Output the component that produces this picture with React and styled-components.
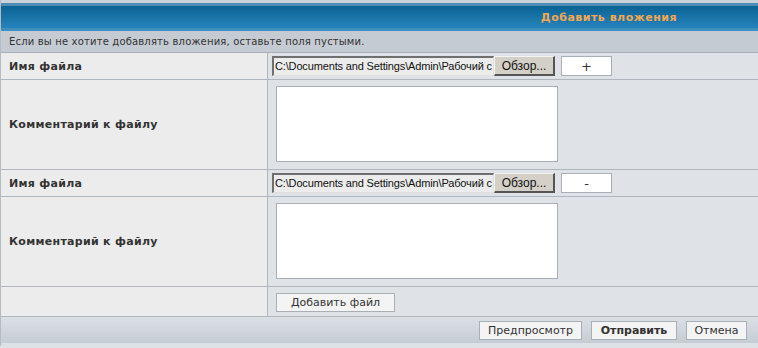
import React from 'react';
import styled, { createGlobalStyle } from 'styled-components';

const Global = createGlobalStyle`
  html, body { margin: 0; padding: 0; background: #dfe3e7; }
  body { font-family: "DejaVu Sans", Verdana, sans-serif; }
`;

const Panel = styled.div`
  width: 758px;
  border-left: 1px solid #b4bbc3;
  box-sizing: border-box;
  background: #dfe3e7;
`;

const TopStrip = styled.div`
  height: 3px;
  background: #ccd4db;
`;

const Header = styled.div`
  height: 28px;
  box-sizing: border-box;
  border-top: 3px solid #4d8cb5;
  border-bottom: 3px solid #3f8fc0;
  background: linear-gradient(to bottom, #0c6394, #2683bb);
  display: flex;
  align-items: center;
  justify-content: flex-end;
  padding-right: 81px;
  color: #f3a751;
  font-size: 11px;
  letter-spacing: 0.5px;
  font-weight: bold;
`;

const Info = styled.div`
  height: 21px;
  background: #c5cbd2;
  border-bottom: 1px solid #a9b0b8;
  display: flex;
  align-items: center;
  padding-left: 8px;
  font-size: 10px;
  letter-spacing: 0.17px;
  color: #333;
`;

const Row = styled.div`
  display: grid;
  grid-template-columns: 267px 1fr;
  height: ${p => p.h}px;
  border-bottom: 1px solid #b0b6bd;
`;

const Label = styled.div`
  background: #ececec;
  border-right: 1px solid #b0b6bd;
  display: flex;
  align-items: center;
  padding-left: 8px;
  font-size: 11px;
  letter-spacing: 0.3px;
  font-weight: bold;
  color: #333;
`;

const Field = styled.div`
  background: #dfe3e7;
  display: flex;
  align-items: ${p => p.top ? 'flex-start' : 'center'};
  padding: ${p => p.top ? '6px 0 0 8px' : '0 0 0 4px'};
  gap: 6px;
`;

const FileBox = styled.div`
  display: flex;
  height: 20px;
`;

const FilePath = styled.div`
  width: 222px;
  height: 20px;
  box-sizing: border-box;
  background: #ececec;
  border-top: 2px solid #6f6f6f;
  border-left: 2px solid #6f6f6f;
  border-right: 1px solid #e0e0e0;
  border-bottom: 1px solid #e0e0e0;
  padding-left: 1px;
  font-family: "Liberation Sans", Arial, sans-serif;
  font-size: 11px;
  letter-spacing: -0.15px;
  color: #111;
  line-height: 17px;
  white-space: nowrap;
  overflow: hidden;
`;

const Browse = styled.div`
  width: 61px;
  height: 20px;
  box-sizing: border-box;
  background: #d4d0c8;
  border-top: 1px solid #f4f4f4;
  border-left: 1px solid #f4f4f4;
  border-right: 2px solid #555;
  border-bottom: 2px solid #555;
  font-family: "Liberation Sans", Arial, sans-serif;
  font-size: 12px;
  color: #111;
  display: flex;
  align-items: center;
  justify-content: center;
`;

const Button = styled.button`
  height: ${p => p.h || 20}px;
  width: ${p => p.w}px;
  padding: 0;
  background: ${p => p.bg || '#f4f4f4'};
  border: 1px solid #a9afb6;
  font-family: "DejaVu Sans", Verdana, sans-serif;
  font-size: ${p => p.fs || 11}px;
  font-weight: ${p => p.bold ? 'bold' : 'normal'};
  color: #333;
`;

const Comment = styled.div`
  width: 280px;
  height: 74px;
  background: #fff;
  border: 1px solid #a9afb6;
`;

const Footer = styled.div`
  height: 26px;
  background: linear-gradient(to bottom, #dbe0e5, #c5ccd3);
  display: flex;
  align-items: center;
  justify-content: flex-end;
  gap: 9px;
  padding-right: 11px;
`;

const Bottom = styled.div`
  height: 3px;
  background: #dde2e6;
`;

function FileRow({ sign }) {
  return (
    <Row h={26}>
      <Label>Имя файла</Label>
      <Field>
        <FileBox>
          <FilePath>C:\Documents and Settings\Admin\Рабочий с</FilePath>
          <Browse>Обзор...</Browse>
        </FileBox>
        <Button w={51} bg="#fff" fs={13}>{sign}</Button>
      </Field>
    </Row>
  );
}

function CommentRow() {
  return (
    <Row h={89}>
      <Label>Комментарий к файлу</Label>
      <Field top>
        <Comment />
      </Field>
    </Row>
  );
}

export default function App() {
  return (
    <>
      <Global />
      <Panel>
        <TopStrip />
        <Header>Добавить вложения</Header>
        <Info>Если вы не хотите добавлять вложения, оставьте поля пустыми.</Info>
        <FileRow sign="+" />
        <CommentRow />
        <FileRow sign="-" />
        <CommentRow />
        <Row h={29}>
          <Label />
          <Field top>
            <Button w={119} h={19}>Добавить файл</Button>
          </Field>
        </Row>
        <Footer>
          <Button w={103} h={19}>Предпросмотр</Button>
          <Button w={86} h={19} bold>Отправить</Button>
          <Button w={61} h={19}>Отмена</Button>
        </Footer>
        <Bottom />
      </Panel>
    </>
  );
}
